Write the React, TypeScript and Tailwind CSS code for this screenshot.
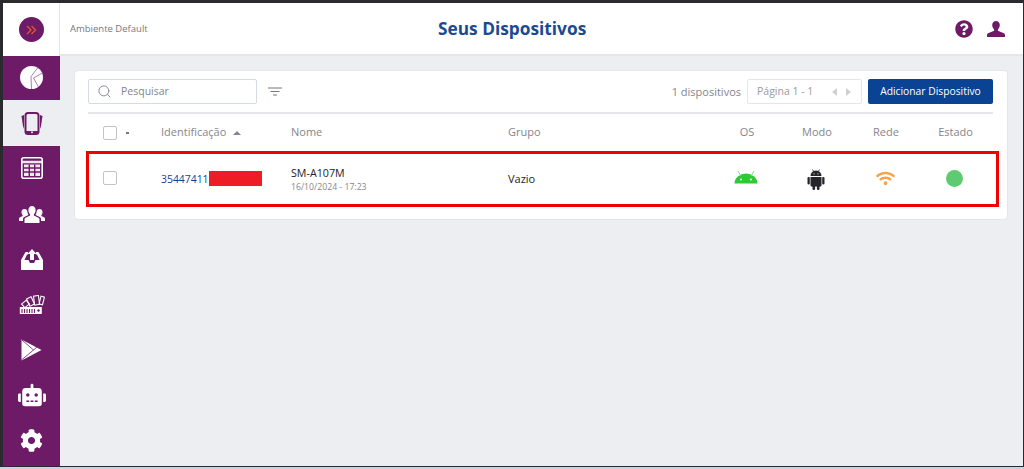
import { ReactNode } from 'react';
import { Search } from 'lucide-react';
import { FaCog, FaQuestionCircle, FaRobot, FaWifi } from 'react-icons/fa';

function DevicesIcon() {
  return (
    <svg width="22" height="23" viewBox="0 0 22 23" fill="#6d1a67">
      <rect x="4.500" y="1" width="13" height="21" rx="2.500" fill="none" stroke="#6d1a67" strokeWidth="2" />
      <rect x="5" y="19" width="12" height="3" fill="#6d1a67" />
      <circle cx="11" cy="20.300" r="1" fill="#edeef2" />
      <path d="M3 3 0.500 4 2 14l1 3Z" />
      <path d="M19 3 21.500 4 20 14l-1 3Z" />
    </svg>
  );
}

function PieIcon() {
  return (
    <svg width="23" height="23" viewBox="0 0 23 23">
      <circle cx="11.500" cy="11.500" r="11.500" fill="#fff" />
      <path d="M18 1.500 11 10.500 11.500 23" stroke="#a06cb0" strokeWidth="0.900" fill="none" />
      <path d="M22.500 7 13.500 12 18.500 21" stroke="#a06cb0" strokeWidth="0.900" fill="none" />
    </svg>
  );
}

function TableIcon() {
  return (
    <svg width="22" height="22" viewBox="0 0 22 22">
      <rect x="0.800" y="0.800" width="20.400" height="20.400" rx="2" fill="none" stroke="#fff" strokeWidth="1.600" />
      <path d="M1 5h20" stroke="#f2e6f0" strokeWidth="2.500" />
      <path d="M3 7.500h16v11.500H3Z" fill="#f2e6f0" />
      <path d="M3 11h16M3 15h16M8.300 7.500v11.500M13.700 7.500v11.500" stroke="#6d1a67" strokeWidth="1.400" />
    </svg>
  );
}

function UsersIcon() {
  return (
    <svg width="26" height="18" viewBox="0 0 26 18" fill="#fff">
      <path d="M13 1c2.200 0 3.600 1.700 3.600 4 0 1.800-.7 3.300-1.700 4.200v1.300l4.600 2.200c.7.400 1 .9 1 1.600V18H5.500v-3.700c0-.7.300-1.200 1-1.600l4.600-2.200V9.200C10.100 8.300 9.400 6.800 9.400 5c0-2.300 1.400-4 3.600-4Z" />
      <path d="M5.500 4C7 4 8 4.900 8.300 6.200c.1 1.300.4 2.500 1 3.400v.5l-4 2c-.9.500-1.300 1.100-1.300 2V16H0v-2.500c0-.5.200-.8.600-1l3-1.400v-1C2.900 9.400 2.500 8.300 2.500 7c0-1.800 1.200-3 3-3Z" />
      <path d="M20.500 4C19 4 18 4.900 17.700 6.200c-.1 1.300-.4 2.500-1 3.400v.5l4 2c.9.500 1.300 1.100 1.300 2V16h4v-2.500c0-.5-.2-.8-.6-1l-3-1.400v-1c.7-.7 1.100-1.800 1.100-3.100 0-1.800-1.200-3-3-3Z" />
    </svg>
  );
}

function InboxIcon() {
  return (
    <svg width="22" height="21" viewBox="0 0 22 21" fill="#fff">
      <path d="M4.500 3H7v2.500H6L3.500 11H7.500l1.500 3h4l1.500-3h4L16 5.500h-1V3h2.500L22 11v10H0V11Z" />
      <path d="M11 0l4.500 5H13v6H9V5H6.500Z" />
    </svg>
  );
}

function SwatchIcon() {
  return (
    <svg width="26" height="20" viewBox="0 0 26 20" fill="none" stroke="#fff" strokeWidth="1.100">
      <rect x="3.500" y="6.500" width="6" height="5" transform="rotate(-40 6.500 9)" />
      <rect x="9" y="2.500" width="5" height="8" transform="rotate(-25 11.500 6.500)" />
      <rect x="15" y="0.800" width="5" height="9" transform="rotate(-8 17.500 5)" />
      <rect x="21" y="1.500" width="3.500" height="8" transform="rotate(14 22.700 5.500)" />
      <path d="M0.800 12h22v7h-22Z" fill="#fff" stroke="none" />
      <path d="M3 14v4M5.500 14v4M8 14v4M10.500 14v4M13 14v4M15.500 14v4" stroke="#6d1a67" />
      <circle cx="19.500" cy="15.500" r="1.200" fill="#6d1a67" stroke="none" />
    </svg>
  );
}

function PlayIcon() {
  return (
    <svg width="21" height="22" viewBox="0 0 21 22">
      <path d="M0.500 0.500 20.500 11 0.500 21.500Z" fill="#fff" />
      <path d="M0.500 21 12.500 11 1 1M12.500 11 16 8" stroke="#6d1a67" strokeWidth="0.800" fill="none" />
    </svg>
  );
}

function GreenAndroid() {
  return (
    <svg width="24" height="14" viewBox="0 0 24 14" fill="#32c832">
      <path d="M0.500 13.500a11.500 10 0 0 1 23 0Z" />
      <path d="M4 1 7 6M20 1 17 6" stroke="#86d88a" strokeWidth="1" />
      <circle cx="7" cy="9.500" r="1.100" fill="#e8f8e8" />
      <circle cx="17" cy="9.500" r="1.100" fill="#e8f8e8" />
    </svg>
  );
}

function BlackAndroid() {
  return (
    <svg width="18" height="21" viewBox="0 0 18 21" fill="#25252b">
      <path d="M3.500 7a5.500 5.500 0 0 1 11 0Z" />
      <path d="M5.500 0.500 7 3M12.500 0.500 11 3" stroke="#25252b" strokeWidth="0.800" />
      <path d="M3.500 8h11v8.500a1 1 0 0 1-1 1h-9a1 1 0 0 1-1-1Z" />
      <rect x="0.500" y="8" width="2.300" height="7.500" rx="1.100" />
      <rect x="15.200" y="8" width="2.300" height="7.500" rx="1.100" />
      <rect x="5.500" y="16" width="2.600" height="5" rx="1.200" />
      <rect x="9.900" y="16" width="2.600" height="5" rx="1.200" />
      <circle cx="7" cy="4.800" r="0.600" fill="#fff" />
      <circle cx="11" cy="4.800" r="0.600" fill="#fff" />
    </svg>
  );
}

function BustIcon() {
  return (
    <svg width="18" height="16" viewBox="0 0 18 16" fill="#6d1a67">
      <path d="M9 0c2.300 0 3.800 1.700 3.800 4.100 0 1.900-.8 3.400-1.900 4.300v1.300l5.400 2.300c1 .4 1.700 1.100 1.700 2.200V16H0v-1.800c0-1.100.7-1.800 1.700-2.200l5.400-2.300V8.400C6 7.500 5.200 6 5.200 4.100 5.200 1.700 6.700 0 9 0Z" />
    </svg>
  );
}

const sidebarItems: { icon: ReactNode; active?: boolean }[] = [
  { icon: <PieIcon /> },
  { icon: <DevicesIcon />, active: true },
  { icon: <TableIcon /> },
  { icon: <UsersIcon /> },
  { icon: <InboxIcon /> },
  { icon: <SwatchIcon /> },
  { icon: <PlayIcon /> },
  { icon: <FaRobot size={28} color="#fff" /> },
  { icon: <FaCog size={23} color="#fff" /> },
];

const checkbox = 'w-[14px] h-[14px] border border-[#c4c4c8] rounded-[2px] bg-white';

export default function App() {
  return (
    <div className="w-[1024px] h-[469px] overflow-hidden bg-[#c9d3e0] font-['Open_Sans',sans-serif]">
      <div className="h-[467px] border-t-[3px] border-l-[3px] border-b-[1px] border-r-[1px] border-[#2b2b2f] flex bg-[#edeef2]">
        <aside className="w-[57px] flex flex-col shrink-0">
          <div className="h-[53px] bg-white border-r border-[#e4e4e8] flex items-center justify-center">
            <div className="w-[25px] h-[25px] rounded-full bg-[#6d1a67] flex items-center justify-center">
              <svg width="11" height="10" viewBox="0 0 11 10" fill="none" stroke="#e2582b" strokeWidth="1.300">
                <path d="M1 1l4 4-4 4M5.500 1l4 4-4 4" />
              </svg>
            </div>
          </div>
          <nav className="flex-1 flex flex-col bg-[#6d1a67]">
            {sidebarItems.map((item, i) => (
              <div
                key={i}
                className={`h-[45.400px] flex items-center justify-center -translate-y-[1px] ${item.active ? 'bg-[#edeef2]' : ''}`}
              >
                {item.icon}
              </div>
            ))}
          </nav>
        </aside>

        <main className="flex-1 flex flex-col min-w-0">
          <header className="h-[53px] bg-white border-b-2 border-[#e6e6ea] flex items-center justify-between pl-[10px] pr-[18px] relative">
            <span className="text-[9.500px] text-[#77777f] pt-[2px]">Ambiente Default</span>
            <h1 className="absolute left-[378px] top-[13px] text-[17.300px] leading-[26px] font-bold text-[#1c4a92]">
              Seus Dispositivos
            </h1>
            <div className="flex items-center gap-[14px]">
              <FaQuestionCircle size={18} color="#6d1a67" />
              <BustIcon />
            </div>
          </header>

          <div className="pt-[14px] pl-[14px] pr-[15px]">
            <section className="h-[150px] bg-white rounded-[4px] border border-[#e6e6ea] pl-[13px] pr-[14px]">
              <div className="h-[43px] flex items-center border-b-2 border-[#e6e6ea]">
                <div className="w-[169px] h-[25px] border border-[#d5dae3] rounded-[2px] flex items-center pl-[8px] gap-[9px]">
                  <Search size={15} color="#85858d" strokeWidth={1.500} />
                  <span className="text-[10.500px] text-[#85858d] pt-[1px]">Pesquisar</span>
                </div>
                <svg className="ml-[11px]" width="14" height="9" viewBox="0 0 14 9" stroke="#77777f" strokeWidth="1">
                  <path d="M0 1h14M2.500 4.500h9M5 8h4" />
                </svg>
                <span className="ml-auto text-[11px] text-[#85858d] pt-[1px]">1 dispositivos</span>
                <div className="ml-[6px] w-[115px] h-[25px] border border-[#e6e6ea] rounded-[2px] flex items-center pl-[9px] text-[10.500px] text-[#9a9aa2]">
                  <span className="pt-[1px]">Página 1 - 1</span>
                  <span className="ml-[19px] w-0 h-0 border-y-[4px] border-y-transparent border-r-[5px] border-r-[#d0d0d4]" />
                  <span className="ml-[9px] w-0 h-0 border-y-[4px] border-y-transparent border-l-[5px] border-l-[#d0d0d4]" />
                </div>
                <button className="ml-[6px] w-[125px] h-[25px] bg-[#0a4393] rounded-[2px] text-white text-[10.300px] pt-[1px]">
                  Adicionar Dispositivo
                </button>
              </div>

              <div className="h-[37px] flex items-center text-[11px] text-[#85858d]">
                <div className="w-[73px] pl-[15px] flex items-center">
                  <span className={checkbox} />
                  <span className="ml-[9px] w-[3px] h-[2px] bg-[#77777f]" />
                </div>
                <div className="w-[130px] flex items-center gap-[7px]">
                  Identificação
                  <span className="w-0 h-0 border-x-[4px] border-x-transparent border-b-[4px] border-b-[#85858d]" />
                </div>
                <div className="w-[217px]">Nome</div>
                <div className="w-[204px]">Grupo</div>
                <div className="w-[70px] text-center">OS</div>
                <div className="w-[70px] text-center">Modo</div>
                <div className="w-[68px] text-center">Rede</div>
                <div className="w-[71px] text-center">Estado</div>
              </div>

              <div className="h-[56px] -ml-[2px] -mr-[6px] border-[3px] border-[#f00000] flex items-center text-[11px] text-[#222226]">
                <div className="w-[72px] pl-[14px]">
                  <span className={`${checkbox} block -translate-y-[1px]`} />
                </div>
                <div className="w-[130px] flex items-center text-[10.400px] text-[#123f8f]">
                  <span className="pt-[1px]">35447411</span>
                  <span className="w-[53px] h-[15px] bg-[#ee1c25]" />
                </div>
                <div className="w-[217px] pt-[1px]">
                  <div className="text-[10.700px] leading-[15px]">SM-A107M</div>
                  <div className="text-[8.700px] leading-[13px] text-[#85858d]">16/10/2024 - 17:23</div>
                </div>
                <div className="w-[204px]">Vazio</div>
                <div className="w-[70px] -translate-x-[1px] flex justify-center pb-[4px]"><GreenAndroid /></div>
                <div className="w-[70px] -translate-x-[1px] flex justify-center"><BlackAndroid /></div>
                <div className="w-[68px] -translate-x-[1px] flex justify-center pb-[2px]"><FaWifi size={19} color="#f2a54a" /></div>
                <div className="w-[71px] -translate-x-[1px] flex justify-center pb-[2px]">
                  <span className="w-[17px] h-[17px] rounded-full bg-[#5ecb72]" />
                </div>
              </div>
            </section>
          </div>
        </main>
      </div>
    </div>
  );
}
